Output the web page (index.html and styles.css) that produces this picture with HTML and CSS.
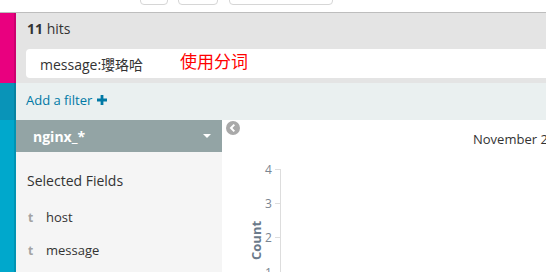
FILE: index.html
```html
<html>
<head>
	<meta charset="UTF-8">
	<link rel="stylesheet" href="styles.css">
</head>
<body>
	<div class="page">
		<div class="topbar">
			<div class="topbar-btn btn-a"></div>
			<div class="topbar-btn btn-b"></div>
			<div class="topbar-btn btn-c"></div>
		</div>
		<div class="app">
			<div class="nav">
				<div class="nav-pink"></div>
				<div class="nav-blue"></div>
				<div class="nav-teal"></div>
			</div>
			<div class="workspace">
				<div class="query-bar">
					<div class="hits"><b>11</b> hits</div>
					<div class="query-input">
						<span class="query-text">message:瓔珞哈</span>
						<span class="query-note">使用分词</span>
					</div>
				</div>
				<div class="filter-bar">
					<span class="add-filter">Add a filter
						<svg class="plus" width="10" height="10" viewBox="0 0 10 10"><path d="M3.6 0h2.8v3.6H10v2.8H6.4V10H3.6V6.4H0V3.6h3.6z" fill="#0079a5"/></svg>
					</span>
				</div>
				<div class="content">
					<div class="sidebar">
						<div class="sidebar-head">
							<span class="index-name">nginx_*</span>
							<span class="caret"></span>
						</div>
						<div class="sidebar-title">Selected Fields</div>
						<div class="field"><span class="field-type">t</span>host</div>
						<div class="field"><span class="field-type">t</span>message</div>
					</div>
					<div class="chart">
						<div class="chart-top">
							<svg class="collapse" width="14" height="14" viewBox="0 0 14 14"><circle cx="7" cy="7" r="7" fill="#a9a9a9"/><path d="M8.3 3.6L5 7l3.3 3.4" fill="none" stroke="#fff" stroke-width="2"/></svg>
							<span class="chart-title">November 25th 2017, 00:00:00.000</span>
						</div>
						<div class="chart-body">
							<div class="y-title">Count</div>
							<div class="y-ticks">
								<div class="y-tick">4</div>
								<div class="y-tick">3</div>
								<div class="y-tick">2</div>
								<div class="y-tick">1</div>
							</div>
							<div class="y-line"></div>
						</div>
					</div>
				</div>
			</div>
		</div>
	</div>
</body>
</html>
```
FILE: styles.css
```css
body {
	margin: 0;
	font-family: "Open Sans", "Noto Sans CJK SC", sans-serif;
	color: #333;
}
.page {
	display: flex;
	flex-direction: column;
	height: 272px;
	overflow: hidden;
}
.topbar {
	display: flex;
	height: 12px;
	padding-left: 140px;
	border-bottom: 1px solid #bdbdbd;
	background: #fff;
}
.topbar-btn {
	height: 9px;
	margin-top: -6px;
	border: 1px solid #d6d6d6;
	border-radius: 4px;
}
.btn-a { width: 26px; }
.btn-b { width: 38px; margin-left: 10px; }
.btn-c { width: 102px; margin-left: 11px; }
.app {
	display: flex;
	flex: 1;
	min-height: 0;
}
.nav {
	display: flex;
	flex-direction: column;
	width: 16px;
	flex-shrink: 0;
}
.nav div {
	box-shadow: inset -2px 0 0 rgba(0,0,0,0.12);
}
.nav-pink {
	height: 70px;
	background: #e9007f;
}
.nav-blue {
	height: 37px;
	background: #0994b8;
}
.nav-teal {
	flex: 1;
	background: #00a8cc;
}
.workspace {
	display: flex;
	flex-direction: column;
	flex: 1;
	min-width: 0;
}
.query-bar {
	height: 70px;
	box-sizing: border-box;
	padding: 6px 0 0 10px;
	background: #e4e4e4;
}
.hits {
	font-size: 14px;
	line-height: 20px;
	padding-left: 1px;
}
.query-input {
	display: flex;
	align-items: center;
	height: 29px;
	margin-top: 10px;
	padding-left: 14px;
	background: #fff;
	border-radius: 4px 0 0 4px;
}
.query-text {
	font-size: 14px;
}
.query-note {
	margin-left: 37px;
	margin-top: -6px;
	font-size: 17px;
	color: #f00;
}
.filter-bar {
	height: 37px;
	box-sizing: border-box;
	padding: 7px 0 0 10px;
	background: #eaf0f0;
}
.add-filter {
	font-size: 13px;
	line-height: 20px;
	color: #0079a5;
}
.plus {
	margin-left: 1px;
}
.content {
	display: flex;
	flex: 1;
	min-height: 0;
}
.sidebar {
	width: 206px;
	flex-shrink: 0;
	background: #f5f5f5;
}
.sidebar-head {
	display: flex;
	align-items: center;
	justify-content: space-between;
	height: 32px;
	padding: 0 11px 0 17px;
	background: #93a4a5;
}
.index-name {
	color: #fff;
	font-weight: bold;
	font-size: 14px;
}
.caret {
	width: 0;
	height: 0;
	border-left: 4px solid transparent;
	border-right: 4px solid transparent;
	border-top: 4px solid #fff;
}
.sidebar-title {
	font-size: 14px;
	line-height: 20px;
	padding: 19px 0 0 11px;
	margin-bottom: 10px;
}
.field {
	font-size: 13px;
	line-height: 32px;
	padding-left: 12px;
}
.field-type {
	display: inline-block;
	width: 18px;
	font-size: 12px;
	font-weight: bold;
	color: #a3a3a3;
}
.chart {
	flex: 1;
	min-width: 0;
	background: #fff;
	overflow: hidden;
}
.chart-top {
	display: flex;
	height: 34px;
	padding: 1px 0 0 4px;
	box-sizing: border-box;
}
.collapse {
	flex-shrink: 0;
}
.chart-title {
	margin: 9px 0 0 233px;
	font-size: 13px;
	white-space: nowrap;
}
.chart-body {
	display: flex;
	padding-left: 27px;
	margin-top: 6px;
}
.y-title {
	writing-mode: vertical-rl;
	transform: rotate(180deg);
	font-size: 13px;
	font-weight: bold;
	color: #6b7a8a;
	margin-top: 60px;
	height: 40px;
	line-height: 14px;
}
.y-ticks {
	margin-left: 2px;
	margin-top: -8px;
}
.y-tick {
	display: flex;
	align-items: center;
	height: 34.4px;
	font-size: 12px;
	color: #7a8591;
}
.y-tick::after {
	content: "";
	width: 5px;
	height: 1px;
	margin-left: 3px;
	background: #ddd;
}
.y-line {
	width: 1px;
	height: 120px;
	background: #ddd;
	margin-top: 9px;
}
```
